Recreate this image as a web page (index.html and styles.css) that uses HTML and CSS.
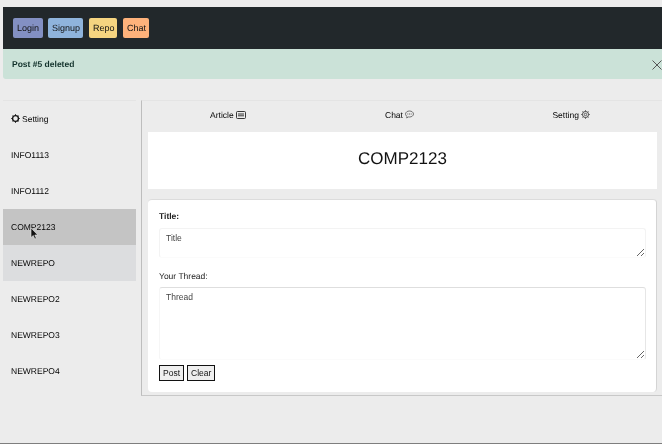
FILE: index.html
```html
<!DOCTYPE html>
<html lang="en">
<head>
<meta charset="utf-8">
<title>Repo</title>
<link rel="stylesheet" href="styles.css">
</head>
<body>
<div class="page">
  <nav class="navbar">
    <a class="nav-btn login">Login</a>
    <a class="nav-btn signup">Signup</a>
    <a class="nav-btn repo">Repo</a>
    <a class="nav-btn chat">Chat</a>
  </nav>
  <div class="alert">
    <strong>Post #5 deleted</strong>
    <svg class="close" width="10" height="10" viewBox="0 0 10 10"><path d="M.5.5l9 9M9.500.5l-9 9" stroke="#555" stroke-width="1" fill="none"/></svg>
  </div>
  <div class="main">
    <aside class="sidebar">
      <div class="side-item">
        <svg class="icon" width="9" height="9" viewBox="0 0 16 16"><circle cx="8" cy="8" r="5.200" fill="none" stroke="#111" stroke-width="2.400"/><path d="M8 .5v2M8 13.500v2M.5 8h2M13.500 8h2M2.700 2.700l1.400 1.400M11.900 11.900l1.400 1.400M13.300 2.700l-1.400 1.400M4.100 11.900l-1.400 1.400" stroke="#111" stroke-width="1.800"/></svg>
        Setting
      </div>
      <div class="side-item">INFO1113</div>
      <div class="side-item">INFO1112</div>
      <div class="side-item active">COMP2123
        <svg class="cursor" width="9" height="13" viewBox="0 0 9 13"><path d="M1 1v9.500l2.300-2 1.500 3.500 1.500-.7-1.500-3.300h3z" fill="#111" stroke="#eee" stroke-width=".6"/></svg>
      </div>
      <div class="side-item hover">NEWREPO</div>
      <div class="side-item">NEWREPO2</div>
      <div class="side-item">NEWREPO3</div>
      <div class="side-item">NEWREPO4</div>
    </aside>
    <section class="content">
      <div class="tabs">
        <div class="tab">Article
          <svg width="10" height="8" viewBox="0 0 10 8"><rect x=".5" y=".5" width="9" height="7" rx="1" fill="none" stroke="#222" stroke-width=".9"/><path d="M2 3h6M2 4.800h6" stroke="#222" stroke-width=".9"/></svg>
        </div>
        <div class="tab">Chat
          <svg width="9" height="9" viewBox="0 0 9 9"><path d="M4.500 1C2.300 1 .5 2.300.5 4c0 1 .6 1.800 1.500 2.300L1.700 8l1.900-1.100c.3 0 .6.100.9.100 2.200 0 4-1.300 4-3S6.700 1 4.500 1z" fill="none" stroke="#444" stroke-width=".7"/><path d="M2.300 4h4.400" stroke="#444" stroke-width=".8" stroke-dasharray="1 .7"/></svg>
        </div>
        <div class="tab">Setting
          <svg width="9" height="9" viewBox="0 0 16 16"><circle cx="8" cy="8" r="5.500" fill="none" stroke="#333" stroke-width="1.500"/><circle cx="8" cy="8" r="2.200" fill="none" stroke="#333" stroke-width="1.300"/><path d="M8 .5v2M8 13.500v2M.5 8h2M13.500 8h2M2.700 2.700l1.400 1.400M11.900 11.900l1.400 1.400M13.300 2.700l-1.400 1.400M4.100 11.900l-1.400 1.400" stroke="#333" stroke-width="1.500"/></svg>
        </div>
      </div>
      <div class="heading"><h1>COMP2123</h1></div>
      <form class="card">
        <label class="label bold">Title:</label>
        <textarea class="field title-field" placeholder="Title"></textarea>
        <label class="label thread-label">Your Thread:</label>
        <textarea class="field thread-field" placeholder="Thread"></textarea>
        <div class="actions">
          <button type="button" class="btn">Post</button>
          <button type="button" class="btn">Clear</button>
        </div>
      </form>
    </section>
  </div>
</div>
</body>
</html>
```
FILE: styles.css
```css
* { box-sizing: border-box; }
html { background: #ececec; }
html, body { margin: 0; height: 100%; }
body {
  font-family: "Liberation Sans", Arial, sans-serif;
  font-size: 8.500px;
  color: #111;
  overflow: hidden;
}
.page {
  height: 444px;
  padding: 7px 0 0 3px;
  border-bottom: 1px solid #7d7d7d;
  will-change: transform, opacity;
  opacity: .995;
  text-rendering: geometricPrecision;
}
.navbar {
  height: 42px;
  background: #21272a;
  display: flex;
  align-items: center;
  padding: 0 0 0 10px;
  gap: 5px;
}
.nav-btn {
  display: block;
  height: 20px;
  line-height: 20px;
  padding: 0 4px;
  border-radius: 2px;
  font-size: 9px;
  color: #111;
  text-align: center;
}
.login { width: 30px; background: #8390c3; }
.signup { width: 35px; background: #8fb4dc; }
.repo { width: 28px; margin-left: 1px; background: #f5d47f; }
.chat { width: 26px; margin-left: 1px; background: #feb27a; }
.alert {
  height: 30px;
  background: #cbe2d8;
  border-radius: 0 0 0 3px;
  display: flex;
  align-items: center;
  justify-content: space-between;
  padding: 0 0 0 9px;
  color: #10302a;
  font-size: 8.500px;
}
.close { flex: none; margin-top: 1px; }
.main {
  display: flex;
  margin-top: 21px;
}
.sidebar {
  width: 133px;
  flex: none;
  border-top: 1px solid #e4e4e4;
}
.side-item {
  position: relative;
  height: 36px;
  display: flex;
  align-items: center;
  gap: 2px;
  padding: 0 0 1px 8px;
  font-size: 8.500px;
  color: #000;
}
.active { background: #c4c4c4; }
.hover { background: #dcdddf; }
.cursor { position: absolute; left: 27px; top: 18px; }
.content {
  flex: 1;
  margin-left: 5px;
  height: 296px;
  border-left: 1px solid #bdbdbd;
  border-bottom: 1px solid #c8c8c8;
  border-top: 1px solid #e4e4e4;
  padding: 0 5px 0 6px;
}
.tabs {
  height: 31px;
  margin-left: -6px;
  padding-bottom: 4px;
  display: grid;
  grid-template-columns: repeat(3, 1fr);
}
.tab {
  display: flex;
  align-items: center;
  justify-content: center;
  gap: 2px;
  font-size: 8.500px;
  color: #000;
}
.heading {
  height: 57px;
  background: #fff;
  padding-bottom: 4px;
  display: flex;
  align-items: center;
  justify-content: center;
}
h1 {
  margin: 0;
  font-size: 17px;
  font-weight: 400;
  color: #111;
}
.card {
  margin-top: 10px;
  height: 193px;
  background: #fff;
  border-radius: 4px;
  border-top: 1px solid #dcdcdc;
  border-right: 1px solid #d4d4d4;
  padding: 10px 10px 0 11px;
  display: flex;
  flex-direction: column;
}
.label {
  display: block;
  height: 12px;
  line-height: 12px;
  font-size: 8.500px;
  color: #222;
}
.bold { font-weight: 700; }
.field {
  display: block;
  width: 100%;
  margin: 0;
  border: 1px solid #f3f3f3;
  border-bottom-color: #fbfbfb;
  border-radius: 3px;
  outline: none;
  background: #fff;
  font-family: inherit;
  font-size: 8.500px;
  padding: 4px 6px;
  color: #333;
}
.field::placeholder { color: #444; opacity: 1; }
.title-field { margin-top: 6px; height: 30px; }
.thread-label { margin-top: 12px; }
.thread-field {
  margin-top: 5px;
  height: 73px;
  border-top-color: #dedede;
  border-right-color: #e6e6e6;
  border-left-color: #f6f6f6;
}
.actions { display: flex; gap: 3px; margin-top: 5px; }
.btn {
  height: 16px;
  padding: 0 3px;
  border: 1px solid #111;
  border-radius: 0;
  background: #efefef;
  font-family: inherit;
  font-size: 8.500px;
  color: #111;
}
```
